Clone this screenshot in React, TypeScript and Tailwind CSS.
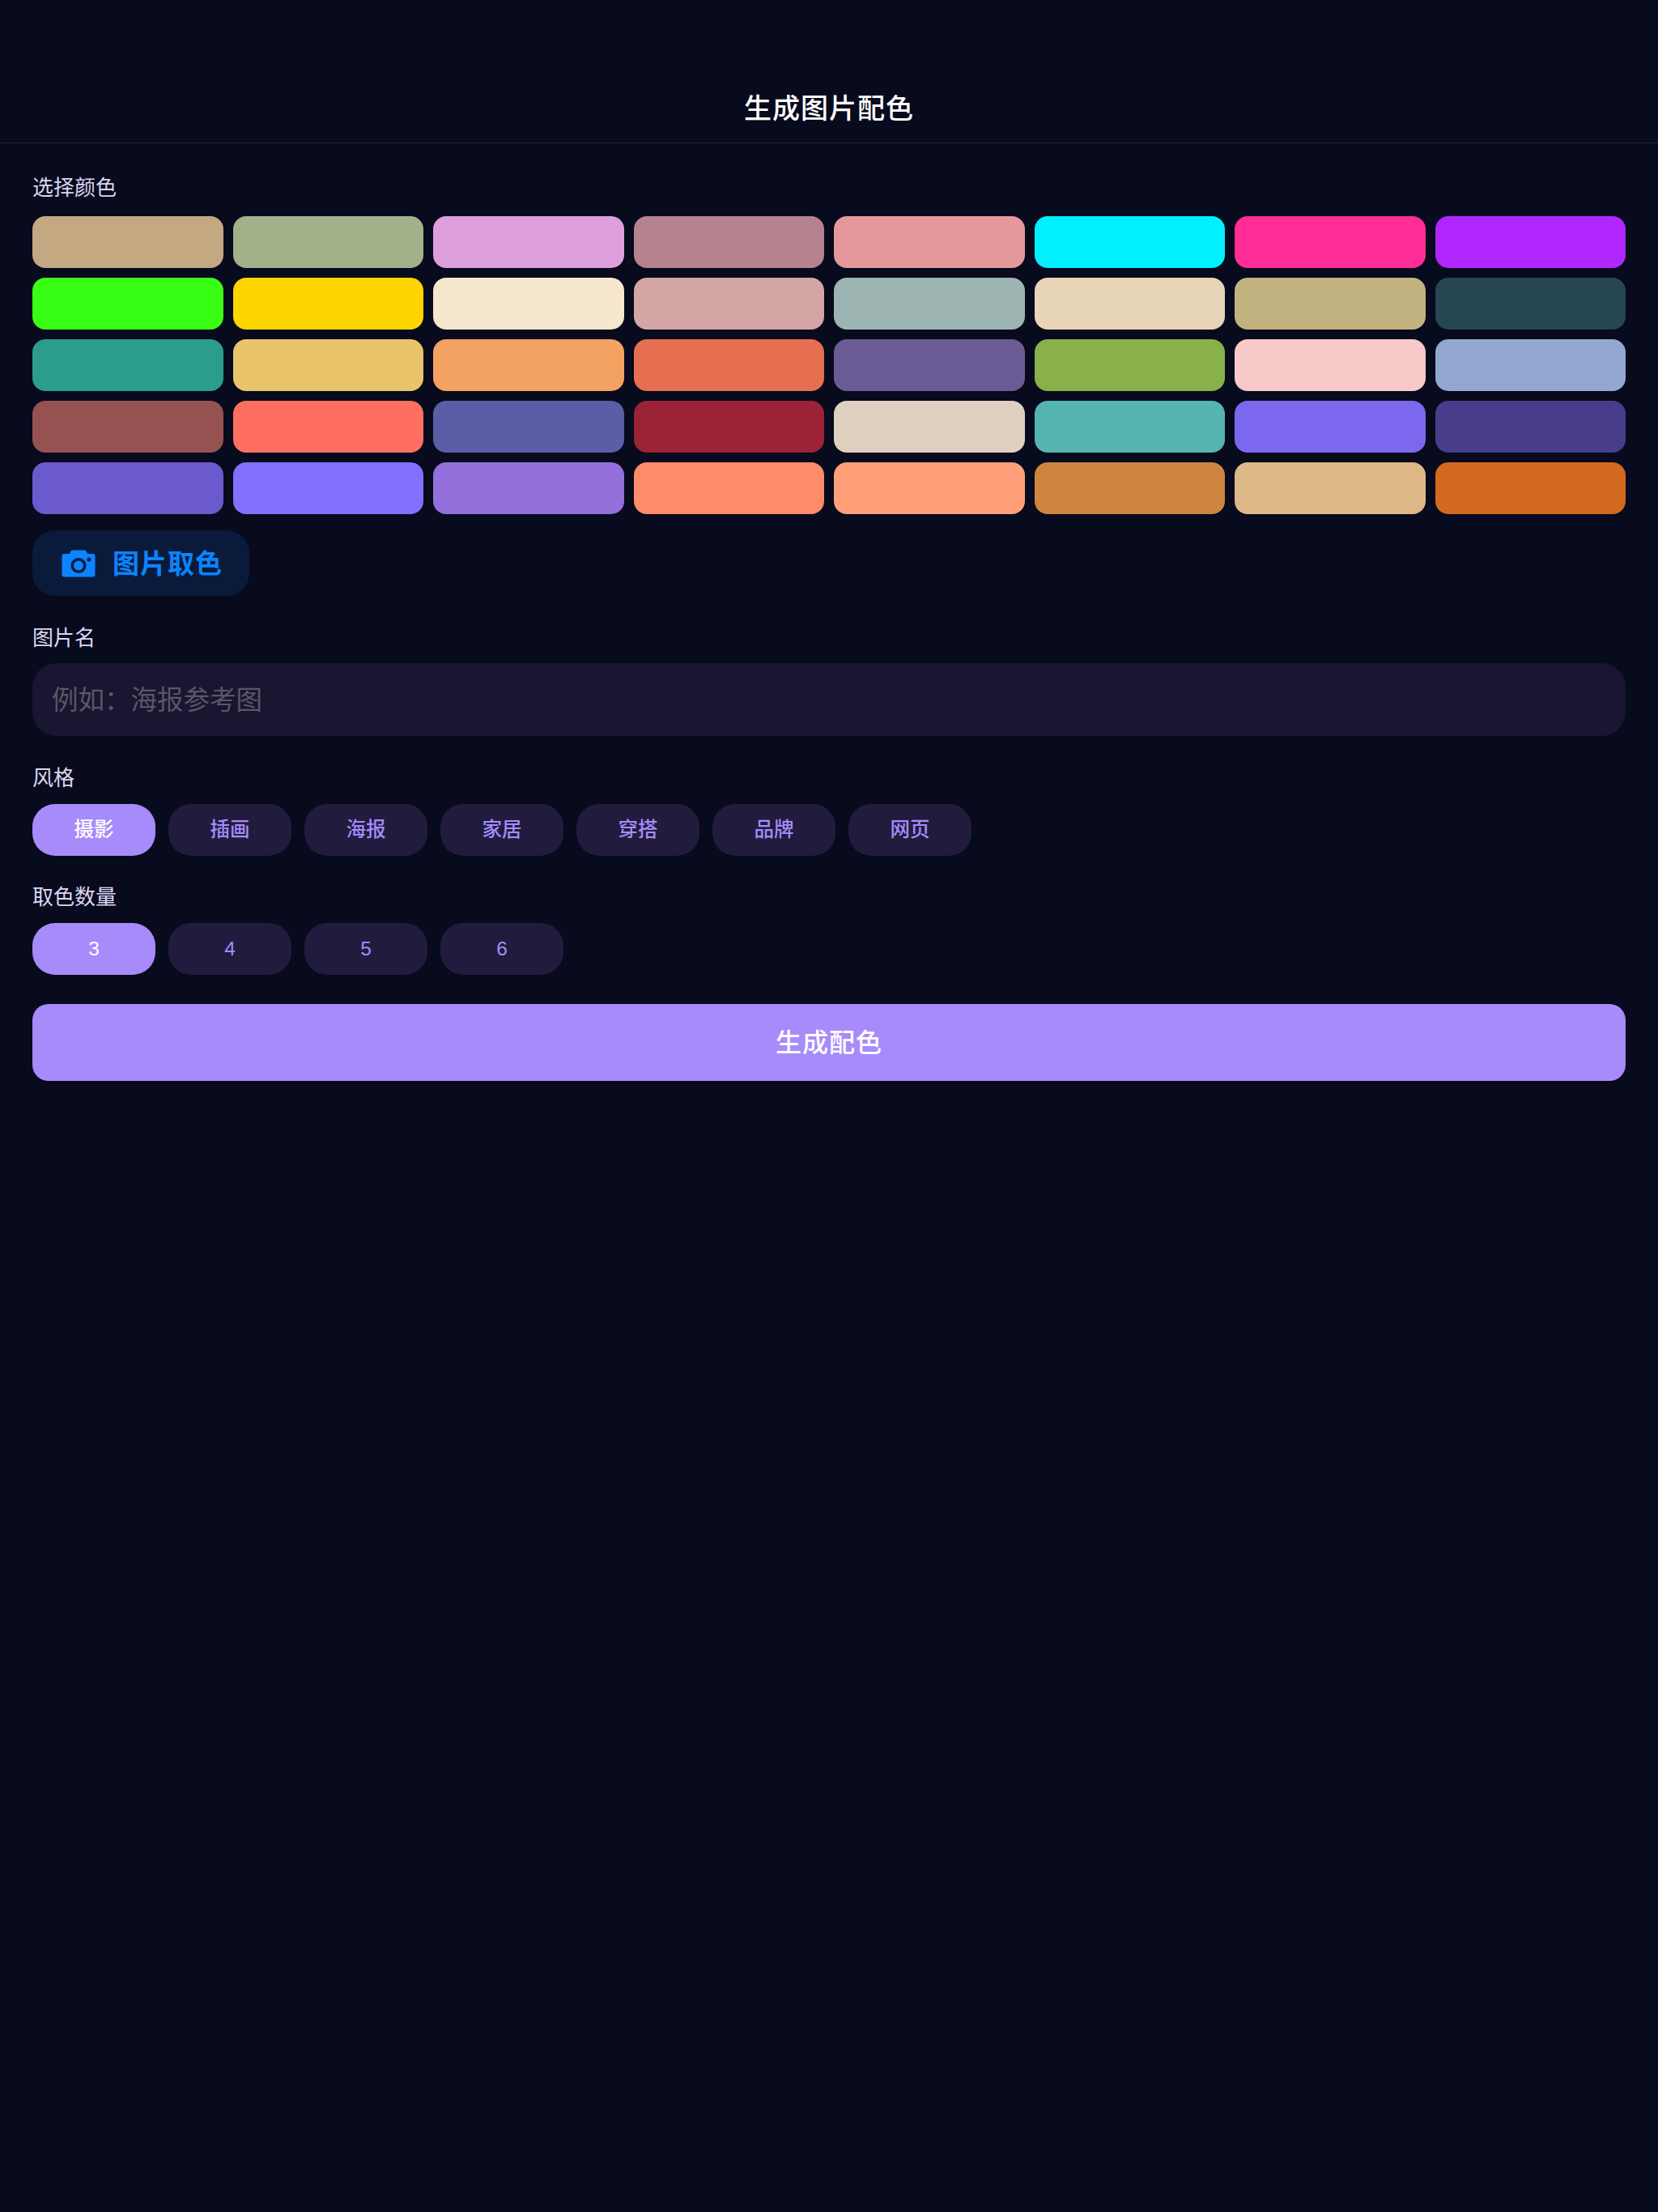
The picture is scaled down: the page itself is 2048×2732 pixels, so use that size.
import { useState } from "react";

const COLORS = [
  "#C4A882", "#A3B18A", "#DDA0DD", "#B5838D", "#E5989B", "#00F0FF", "#FF2D95", "#B026FF",
  "#39FF14", "#FFD500", "#F7E7CE", "#D4A5A5", "#9DB5B2", "#E8D5B7", "#C2B280", "#264653",
  "#2A9D8F", "#E9C46A", "#F4A261", "#E76F51", "#6B5B95", "#88B04B", "#F7CAC9", "#92A8D1",
  "#955251", "#FF6F61", "#5B5EA6", "#9B2335", "#DFCFBE", "#55B4B0", "#7B68EE", "#483D8B",
  "#6A5ACD", "#8470FF", "#9370DB", "#FF8C69", "#FFA07A", "#CD853F", "#DEB887", "#D2691E",
];

const STYLES = ["摄影", "插画", "海报", "家居", "穿搭", "品牌", "网页"];
const COUNTS = ["3", "4", "5", "6"];

function Pill({ label, active, onClick }: { label: string; active: boolean; onClick: () => void }) {
  return (
    <button
      onClick={onClick}
      className={`h-16 w-[152px] rounded-[28px] pt-[1px] text-[24.5px] font-medium ${
        active ? "bg-[#a78bfa] text-white" : "bg-[#211c3d] text-[#a78bfa]"
      }`}
    >
      {label}
    </button>
  );
}

export default function App() {
  const [style, setStyle] = useState("摄影");
  const [count, setCount] = useState("3");

  return (
    <div className="min-h-[2732px] bg-[#080a1d] font-['Liberation_Sans','Noto_Sans_CJK_SC',sans-serif]">
      <header className="h-[177px] border-b border-[#23253a] pt-[108px] text-center text-[34px] leading-[52px] font-medium tracking-[1px] text-white">
        生成图片配色
      </header>

      <div className="px-10">
        <h2 className="mt-[37px] mb-[17px] text-[26px] leading-9 text-[#dcd6f2]">选择颜色</h2>
        <div className="grid grid-cols-8 gap-3">
          {COLORS.map((c, i) => (
            <div key={i} className="h-16 rounded-[16px]" style={{ backgroundColor: c }} />
          ))}
        </div>

        <button className="mt-5 flex h-[81px] w-[268px] items-center gap-[21px] rounded-[28px] bg-[#0a1a3a] pl-9 pt-[1px] text-[33px] leading-none font-semibold tracking-[1px] text-[#0a84ff]">
          <svg width="42" height="34" viewBox="0 0 42 34" className="shrink-0">
            <path
              fill="#0a84ff"
              fillRule="evenodd"
              d="M14 0.5 H28 C29.5 0.5 30.5 1.2 31 2.5 L32 5 H38.5 C40.5 5 41.5 6 41.5 8 V30.5 C41.5 32.5 40.5 33.5 38.5 33.5 H3.5 C1.5 33.5 0.5 32.5 0.5 30.5 V8 C0.5 6 1.5 5 3.5 5 H10 L11 2.5 C11.5 1.2 12.5 0.5 14 0.5 Z M21 10 A9.5 9.5 0 1 0 21 29 A9.5 9.5 0 1 0 21 10 Z M21 13.5 A6 6 0 1 1 21 25.5 A6 6 0 1 1 21 13.5 Z M34 9.5 A2.5 2.5 0 1 0 34 14.5 A2.5 2.5 0 1 0 34 9.5 Z"
            />
          </svg>
          图片取色
        </button>

        <h2 className="mt-[34px] mb-[13px] text-[26px] leading-9 text-[#dcd6f2]">图片名</h2>
        <input
          placeholder="例如：海报参考图"
          className="h-[90px] w-full rounded-[30px] bg-[#1a1530] px-6 pt-[3px] text-[32.5px] text-white outline-none placeholder:text-[#5b5669]"
        />

        <h2 className="mt-[34px] mb-[14px] text-[26px] leading-9 text-[#dcd6f2]">风格</h2>
        <div className="flex gap-4">
          {STYLES.map((s) => (
            <Pill key={s} label={s} active={style === s} onClick={() => setStyle(s)} />
          ))}
        </div>

        <h2 className="mt-[33px] mb-[14px] text-[26px] leading-9 text-[#dcd6f2]">取色数量</h2>
        <div className="flex gap-4">
          {COUNTS.map((n) => (
            <Pill key={n} label={n} active={count === n} onClick={() => setCount(n)} />
          ))}
        </div>

        <button className="mt-9 h-[95px] w-full rounded-[20px] bg-[#a78bfa] text-[32px] font-medium tracking-[1px] text-white">
          生成配色
        </button>
      </div>
    </div>
  );
}
